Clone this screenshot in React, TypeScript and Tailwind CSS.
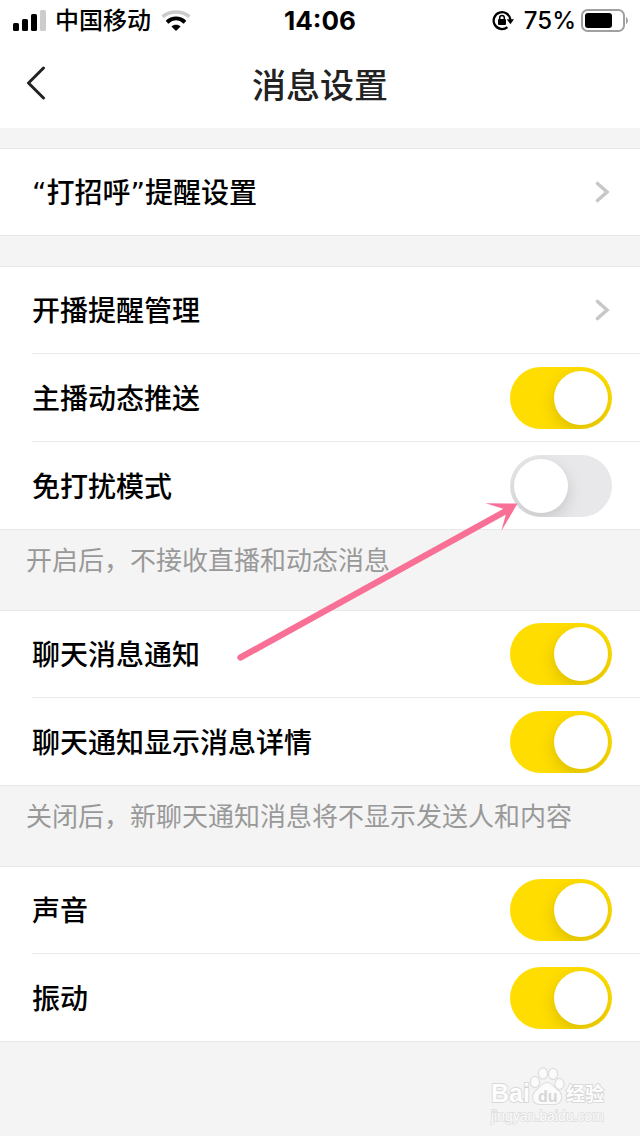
import { useState } from "react";
import type { ReactNode } from "react";

function StatusBar() {
  return (
    <div className="grid h-10 grid-cols-3 items-center px-3 pt-0.5 font-medium text-black">
      <div className="flex items-center gap-2">
        <svg width="35" height="22" viewBox="0 0 35 22" aria-hidden="true">
          <rect x="1" y="13" width="6" height="8" rx="1.5" />
          <rect x="10" y="9" width="6" height="12" rx="1.5" />
          <rect x="19" y="4" width="6" height="17" rx="1.5" />
          <rect x="28" y="0" width="6" height="21" rx="1.5" fill="#cccccc" />
        </svg>
        <span className="whitespace-nowrap text-2xl">中国移动</span>
        <svg width="30" height="22" viewBox="0 0 30 22" aria-hidden="true" className="ml-0.5">
          <path d="M1.5 6.6C9.5 0.4 20.5 0.4 28.5 6.6" fill="none" stroke="#cccccc" strokeWidth="3.6" />
          <path d="M6 12.2C11.5 7.4 18.5 7.4 24 12.2" fill="none" stroke="#000" strokeWidth="4" />
          <path d="M15 21L10.4 16.6C12.8 14.2 17.2 14.2 19.6 16.6Z" />
        </svg>
      </div>
      <time className="text-center text-[26px] leading-8 font-bold">14:06</time>
      <div className="flex items-center justify-end">
        <svg width="22" height="22" viewBox="0 0 22 22" aria-hidden="true" className="mr-2.5">
          <path
            d="M15.4 17.1A8.4 8.4 0 1 1 18.4 9.6"
            fill="none"
            stroke="#000"
            strokeWidth="2.3"
          />
          <path d="M14.8 9.2H22L18.4 14.2Z" />
          <rect x="6" y="9" width="8" height="6" rx="1" />
          <path d="M7.7 9.5V7.7a2.3 2.3 0 0 1 4.6 0V9.5" fill="none" stroke="#000" strokeWidth="1.5" />
        </svg>
        <span className="mr-1 text-2xl">75%</span>
        <svg width="48" height="24" viewBox="0 0 48 24" aria-hidden="true">
          <rect x="2" y="1" width="42" height="21" rx="5.5" fill="none" stroke="#a0a0a0" strokeWidth="2" />
          <rect x="5" y="4" width="27" height="15" rx="3" />
          <path d="M46 8C48.5 9 48.5 14 46 15Z" fill="#a0a0a0" />
        </svg>
      </div>
    </div>
  );
}

function Section({ children }: { children: ReactNode }) {
  return (
    <section className="divide-y divide-[#ebebeb] border-y border-[#e8e8e8] bg-white pl-8 text-[28px] font-medium text-black">
      {children}
    </section>
  );
}

function LinkRow({ label }: { label: string }) {
  return (
    <button
      type="button"
      className="flex h-[88px] w-full items-center justify-between pr-7 text-left first:h-[87px] only:h-[86px]"
    >
      <span className="pt-1">{label}</span>
      <svg width="20" height="24" viewBox="0 0 20 24" aria-hidden="true">
        <path
          d="M5.5 3.5L15 12L5.5 20.5"
          fill="none"
          stroke="#c8c8c8"
          strokeWidth="3.6"
          strokeLinecap="round"
        />
      </svg>
    </button>
  );
}

function SwitchRow({ label, initial = true }: { label: string; initial?: boolean }) {
  const [on, setOn] = useState(initial);

  return (
    <label className="flex h-[88px] items-center justify-between pr-7 first:h-[87px] last:h-[87px]">
      <span className="pt-1">{label}</span>
      <input
        type="checkbox"
        role="switch"
        checked={on}
        onChange={(e) => setOn(e.target.checked)}
        className="flex h-[62px] w-[102px] shrink-0 appearance-none items-center overflow-hidden rounded-full bg-[#e8e8ea] px-1 before:size-[54px] before:rounded-full before:bg-white before:shadow-[0_6px_16px_rgba(0,0,0,0.15)] checked:justify-end checked:bg-[#ffdd00]"
      />
    </label>
  );
}

function Note({ children }: { children: ReactNode }) {
  return <p className="h-20 px-[26px] pt-[13px] text-[26px] leading-9 text-[#999999]">{children}</p>;
}

function Arrow() {
  return (
    <svg
      width="290"
      height="170"
      viewBox="0 0 290 170"
      aria-hidden="true"
      className="pointer-events-none absolute left-[236px] top-[496px]"
    >
      <path d="M4.5 161.5L269 15.5" stroke="#f97096" strokeWidth="6.4" strokeLinecap="round" />
      <path d="M281.5 7.5L249.5 7.2L266.5 12.6L269.8 18.4L265.3 35Z" fill="#f97096" />
    </svg>
  );
}

function Watermark() {
  return (
    <svg
      width="118"
      height="60"
      viewBox="0 0 118 60"
      className="pointer-events-none absolute bottom-2.5 right-8 font-['Liberation_Sans','Noto_Sans_CJK_SC',sans-serif]"
    >
      <g fill="#fbfbfb" stroke="#dedede" strokeWidth="1.2">
        <ellipse cx="45" cy="16" rx="4.6" ry="5.6" />
        <ellipse cx="53" cy="7.5" rx="4.6" ry="5.6" />
        <ellipse cx="63" cy="8" rx="4.6" ry="5.6" />
        <ellipse cx="69.5" cy="18" rx="4.6" ry="5.6" />
        <path d="M57 16.5C62 16.5 64 21 68 24C74.5 29 72 38.5 64 38.5H50C42 38.5 40 29 46.5 24C50 21 52 16.5 57 16.5Z" />
      </g>
      <g fill="#fdfdfd" stroke="#d8d8d8" strokeWidth="1.8" paintOrder="stroke" fontWeight="bold">
        <text x="1" y="36" fontSize="25">Bai</text>
        <text x="76" y="35" fontSize="19">经验</text>
      </g>
      <text x="48" y="36" fontSize="16" fontWeight="bold" fill="#d6d6d6">du</text>
      <text x="1" y="55" fontSize="14" fill="#fbfbfb" stroke="#dcdcdc" strokeWidth="1.4" paintOrder="stroke">
        jingyan.baidu.com
      </text>
    </svg>
  );
}

export default function App() {
  return (
    <main className="relative min-h-screen bg-[#f4f4f4] font-['Inter','Noto_Sans_CJK_SC',sans-serif]">
      <header className="mb-5 bg-white">
        <StatusBar />
        <div className="grid h-[88px] grid-cols-[64px_1fr_64px] items-center">
          <button type="button" aria-label="返回" className="pl-6">
            <svg width="24" height="36" viewBox="0 0 24 36" aria-hidden="true">
              <path
                d="M19.5 2L4.5 17L19.5 32"
                fill="none"
                stroke="#222222"
                strokeWidth="3"
                strokeLinecap="round"
                strokeLinejoin="round"
              />
            </svg>
          </button>
          <h1 className="pt-0.5 text-center text-[34px] font-medium text-[#222222]">消息设置</h1>
        </div>
      </header>

      <div className="font-['DejaVu_Sans','Noto_Sans_CJK_SC',sans-serif]">
        <div className="mb-[30px]">
          <Section>
            <LinkRow label="“打招呼”提醒设置" />
          </Section>
        </div>

        <Section>
          <LinkRow label="开播提醒管理" />
          <SwitchRow label="主播动态推送" />
          <SwitchRow label="免打扰模式" initial={false} />
        </Section>
        <Note>开启后，不接收直播和动态消息</Note>

        <Section>
          <SwitchRow label="聊天消息通知" />
          <SwitchRow label="聊天通知显示消息详情" />
        </Section>
        <Note>关闭后，新聊天通知消息将不显示发送人和内容</Note>

        <Section>
          <SwitchRow label="声音" />
          <SwitchRow label="振动" />
        </Section>
      </div>

      <Arrow />
      <Watermark />
    </main>
  );
}
